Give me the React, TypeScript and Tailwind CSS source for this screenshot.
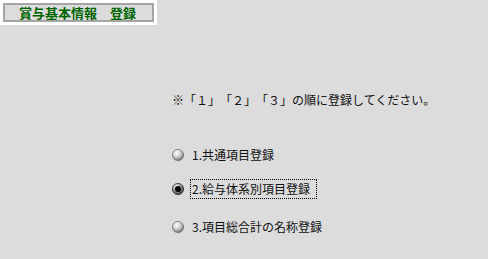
import React from "react";

const jp = { fontFamily: '"Noto Sans CJK JP", "MS PGothic", sans-serif' };

function Radio({ checked }: { checked?: boolean }) {
  const id = checked ? "rg-on" : "rg-off";
  return (
    <svg width="12" height="12" viewBox="0 0 12 12" className="shrink-0">
      <defs>
        <radialGradient id={id} cx="38%" cy="32%" r="72%">
          <stop offset="0%" stopColor="#ffffff" />
          <stop offset="50%" stopColor={checked ? "#a0a0a0" : "#d0d0d0"} />
          <stop offset="100%" stopColor={checked ? "#303030" : "#6a6a6a"} />
        </radialGradient>
      </defs>
      <circle cx="6" cy="6" r="5.6" fill={`url(#${id})`} stroke={checked ? "#2a2a2a" : "#707070"} strokeWidth="0.8" />
      {checked && <circle cx="6" cy="6" r="3" fill="#000" />}
    </svg>
  );
}

const options = [
  { label: "1.共通項目登録", mt: "mt-[37px]" },
  { label: "2.給与体系別項目登録", mt: "mt-[14px]", checked: true },
  { label: "3.項目総合計の名称登録", mt: "mt-[18px]" },
];

export default function App() {
  return (
    <div className="h-[259px] w-[488px] overflow-hidden bg-[#dcdcdc] text-[#111] [text-spacing-trim:space-all]" style={jp}>
      <div className="w-[157px] bg-white p-[3px]">
        <div className="flex h-[19px] items-center border-2 border-[#a4a4a4] bg-[#dcdcdc] pl-[14px] text-[13px] leading-none font-bold text-[#006400]">
          賞与基本情報　登録
        </div>
      </div>

      <div className="pl-[172px]">
        <p className="mt-[67px] text-[12px] leading-4">※「１」「２」「３」の順に登録してください。</p>
        {options.map((o) => (
          <div key={o.label} className={`flex h-5 items-center ${o.mt}`}>
            <Radio checked={o.checked} />
            <span
              className={`ml-[6px] flex h-5 items-center border pr-[6px] pl-px text-[12px] leading-none ${
                o.checked ? "border-dotted border-black" : "border-transparent"
              }`}
            >
              {o.label}
            </span>
          </div>
        ))}
      </div>
    </div>
  );
}
